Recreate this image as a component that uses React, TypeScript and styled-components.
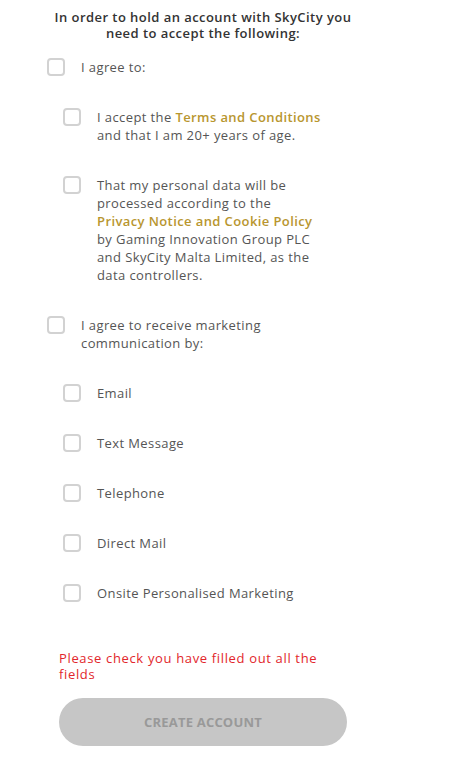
import styled, { createGlobalStyle } from "styled-components";

const GlobalStyle = createGlobalStyle`
  body {
    margin: 0;
    background: #fff;
    font-family: "Open Sans", "Liberation Sans", sans-serif;
  }
`;

interface RowType {
  nested?: boolean;
  children: React.ReactNode;
}

function CheckRow({ nested, children }: RowType) {
  return (
    <Row $nested={nested}>
      <Box type="checkbox" />
      <Label>{children}</Label>
    </Row>
  );
}

const channels = [
  "Email",
  "Text Message",
  "Telephone",
  "Direct Mail",
  "Onsite Personalised Marketing",
];

export default function App() {
  return (
    <>
      <GlobalStyle />
      <Form>
        <Heading>
          In order to hold an account with SkyCity you
          <br />
          need to accept the following:
        </Heading>
        <List>
          <CheckRow>I agree to:</CheckRow>
          <CheckRow nested>
            I accept the <Link>Terms and Conditions</Link>
            <br />
            and that I am 20+ years of age.
          </CheckRow>
          <CheckRow nested>
            That my personal data will be
            <br />
            processed according to the
            <br />
            <Link>Privacy Notice and Cookie Policy</Link>
            <br />
            by Gaming Innovation Group PLC
            <br />
            and SkyCity Malta Limited, as the
            <br />
            data controllers.
          </CheckRow>
          <CheckRow>
            I agree to receive marketing
            <br />
            communication by:
          </CheckRow>
          {channels.map((c) => (
            <CheckRow nested key={c}>
              {c}
            </CheckRow>
          ))}
        </List>
        <Footer>
          <Error>
            Please check you have filled out all the
            <br />
            fields
          </Error>
          <SubmitButton type="button" disabled>
            CREATE ACCOUNT
          </SubmitButton>
        </Footer>
      </Form>
    </>
  );
}

const Form = styled.div`
  width: 312px;
  margin-left: 47px;
  padding-top: 9px;
`;

const Heading = styled.h2`
  margin: 0;
  font-size: 13px;
  line-height: 16px;
  font-weight: 600;
  letter-spacing: 0.45px;
  color: #333;
  text-align: center;
`;

const List = styled.div`
  display: flex;
  flex-direction: column;
  gap: 32px;
  margin-top: 17px;
`;

const Row = styled.label<{ $nested?: boolean }>`
  display: flex;
  align-items: flex-start;
  gap: 16px;
  padding-left: ${({ $nested }) => ($nested ? "16px" : "0")};
`;

const Box = styled.input`
  appearance: none;
  flex-shrink: 0;
  width: 18px;
  height: 18px;
  margin: 0;
  border: 2px solid #d2d2d2;
  border-radius: 4px;
  background: #fff;
  cursor: pointer;
`;

const Label = styled.span`
  font-size: 13px;
  line-height: 18px;
  letter-spacing: 0.4px;
  color: #555;
`;

const Link = styled.a`
  color: #b8962f;
  font-weight: 600;
  text-decoration: none;
`;

const Footer = styled.div`
  padding: 48px 12px 0;
`;

const Error = styled.p`
  margin: 0 0 16px;
  font-size: 13px;
  line-height: 16px;
  font-weight: 500;
  letter-spacing: 0.65px;
  color: #e2262b;
`;

const SubmitButton = styled.button`
  width: 288px;
  height: 48px;
  border: none;
  border-radius: 24px;
  background: #c6c6c6;
  color: #999;
  font-family: inherit;
  font-size: 13px;
  font-weight: 700;
  letter-spacing: 0.2px;
  cursor: not-allowed;
`;
